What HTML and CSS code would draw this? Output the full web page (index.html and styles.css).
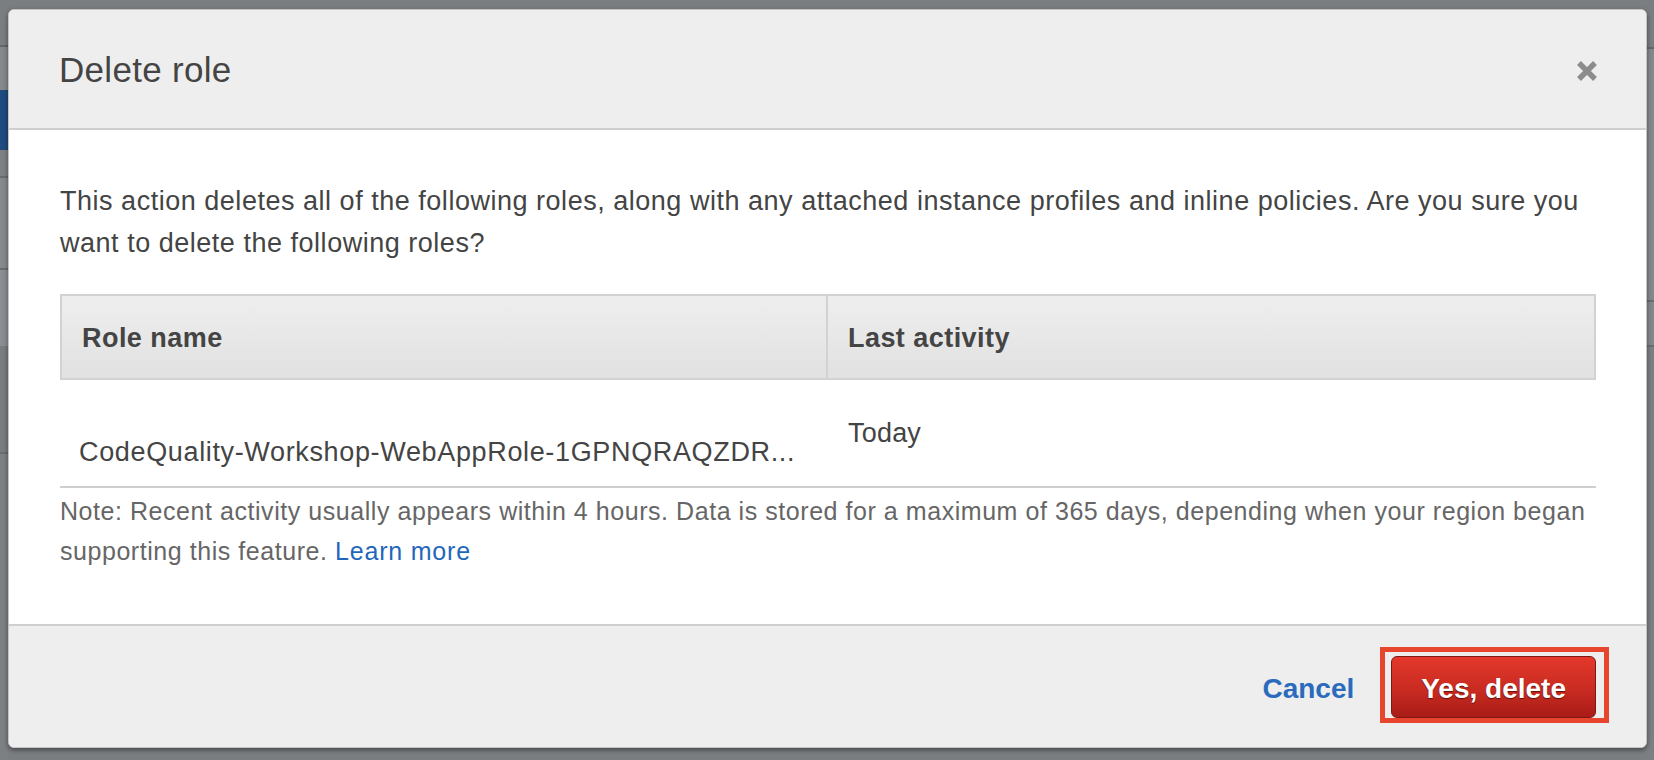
FILE: index.html
```html
<!DOCTYPE html>
<html lang="en">
<head>
<meta charset="utf-8">
<title>Delete role</title>
<link rel="stylesheet" href="styles.css">
</head>
<body>
<div class="backdrop">
  <div class="modal">
    <div class="modal-header">
      <h1 class="modal-title">Delete role</h1>
      <button class="close-btn" type="button" aria-label="Close">
        <svg width="22" height="22" viewBox="0 0 22 22"><path d="M3 3 L19 19 M19 3 L3 19" stroke="#8c8c8c" stroke-width="5.4" stroke-linecap="butt" fill="none"/></svg>
      </button>
    </div>
    <div class="modal-body">
      <p class="intro">This action deletes all of the following roles, along with any attached instance profiles and inline policies. Are you sure you want to delete the following roles?</p>
      <table class="roles">
        <colgroup><col class="col-half"><col class="col-half"></colgroup>
        <thead>
          <tr><th class="th-first">Role name</th><th class="th-second">Last activity</th></tr>
        </thead>
        <tbody>
          <tr><td class="td-name">CodeQuality-Workshop-WebAppRole-1GPNQRAQZDR...</td><td class="td-activity">Today</td></tr>
        </tbody>
      </table>
      <p class="note">Note: Recent activity usually appears within 4 hours. Data is stored for a maximum of 365 days, depending when your region began supporting this feature. <a class="link" href="#">Learn more</a></p>
    </div>
    <div class="modal-footer">
      <a class="cancel" href="#">Cancel</a>
      <span class="highlight"><button class="danger-btn" type="button">Yes, delete</button></span>
    </div>
  </div>
</div>
</body>
</html>
```
FILE: styles.css
```css
html, body {
  margin: 0;
  padding: 0;
}
body {
  width: 1654px;
  height: 760px;
  overflow: hidden;
  font-family: "Liberation Sans", Arial, Helvetica, sans-serif;
  background: #7b7e81;
}
.backdrop {
  height: 760px;
  box-sizing: border-box;
  padding: 9px 7px 12px 8px;
  background-color: #7b7e81;
  background-image:
    linear-gradient(to bottom, #7b7e81 0 45px, #63666a 45px 47px, #86898c 47px 90px, #1f4b7e 90px 150px, #7e8184 150px 176px, #6a6d70 176px 178px, #868a8d 178px 268px, #6a6d70 268px 270px, #8a8e93 270px 346px, #7a7d80 346px 452px, #6a6d70 452px 454px, #7d8083 454px),
    linear-gradient(to bottom, #7b7e81 0 47px, #65686b 47px 49px, #86898c 49px 300px, #6a6d70 300px 302px, #85888b 302px 345px, #6c6f72 345px 347px, #7d8083 347px);
  background-size: 8px 100%, 7px 100%;
  background-position: left top, right top;
  background-repeat: no-repeat;
}
.modal {
  height: 739px;
  box-sizing: border-box;
  display: flex;
  flex-direction: column;
  background: #fff;
  border: 1px solid #c4c4c4;
  border-radius: 6px;
  overflow: hidden;
  box-shadow: 0 2px 5px rgba(0, 0, 0, 0.45);
}
.modal-header {
  height: 120px;
  box-sizing: border-box;
  display: flex;
  align-items: center;
  justify-content: space-between;
  padding: 0 48px 0 50px;
  background: #eeeeee;
  border-bottom: 2px solid #cfcfcf;
}
.modal-title {
  margin: 0;
  font-size: 35px;
  line-height: 40px;
  font-weight: normal;
  letter-spacing: 0.3px;
  color: #444;
  padding-top: 2px;
}
.close-btn {
  display: flex;
  padding: 0;
  margin: 3px 0 0 0;
  border: 0;
  background: none;
}
.modal-body {
  flex: 1;
  padding: 50px 50px 0 51px;
  color: #444;
}
.intro {
  margin: 0;
  font-size: 27px;
  line-height: 42px;
  letter-spacing: 0.52px;
}
.roles {
  width: 100%;
  margin-top: 30px;
  table-layout: fixed;
  border-collapse: separate;
  border-spacing: 0;
}
.col-half {
  width: 50%;
}
.roles th {
  text-align: left;
  font-size: 27px;
  line-height: 31px;
  font-weight: bold;
  letter-spacing: 0.45px;
  color: #444;
  padding: 27px 19px 24px 20px;
  background: linear-gradient(to bottom, #eeeeee, #e1e1e1);
  border: 2px solid #d2d2d2;
}
.roles .th-second {
  border-left: 0;
}
.roles td {
  font-size: 27px;
  line-height: 30px;
  color: #444;
  vertical-align: top;
  border-bottom: 2px solid #cfcfcf;
  white-space: nowrap;
  overflow: hidden;
}
.roles .td-name {
  padding: 57px 6px 19px 19px;
  letter-spacing: 0.65px;
}
.roles .td-activity {
  padding: 38px 19px 19px 20px;
  letter-spacing: 0.2px;
}
.note {
  margin: 3px 0 0 0;
  font-size: 25px;
  line-height: 40px;
  letter-spacing: 0.55px;
  color: #666;
}
.link {
  color: #1f67bd;
  text-decoration: none;
  letter-spacing: 0.8px;
}
.modal-footer {
  height: 123px;
  box-sizing: border-box;
  display: flex;
  justify-content: flex-end;
  align-items: baseline;
  padding: 21px 37px 0 0;
  background: #eeeeee;
  border-top: 2px solid #cfcfcf;
}
.cancel {
  font-size: 28px;
  font-weight: bold;
  color: #2b6bbd;
  text-decoration: none;
  margin-right: 26px;
}
.highlight {
  display: inline-block;
  padding: 4px 8px 0 6px;
  border: 5px solid #e8452e;
}
.danger-btn {
  display: block;
  height: 62px;
  box-sizing: border-box;
  padding: 4px 29px 0 29px;
  line-height: 56px;
  font-family: "Liberation Sans", Arial, Helvetica, sans-serif;
  font-size: 28px;
  font-weight: bold;
  color: #fff;
  text-shadow: 0 1px 1px rgba(60, 0, 0, 0.7);
  background: linear-gradient(to bottom, #e4382b, #c82b21 55%, #a91c17);
  border: 1px solid #7e1812;
  border-radius: 6px;
}
```
